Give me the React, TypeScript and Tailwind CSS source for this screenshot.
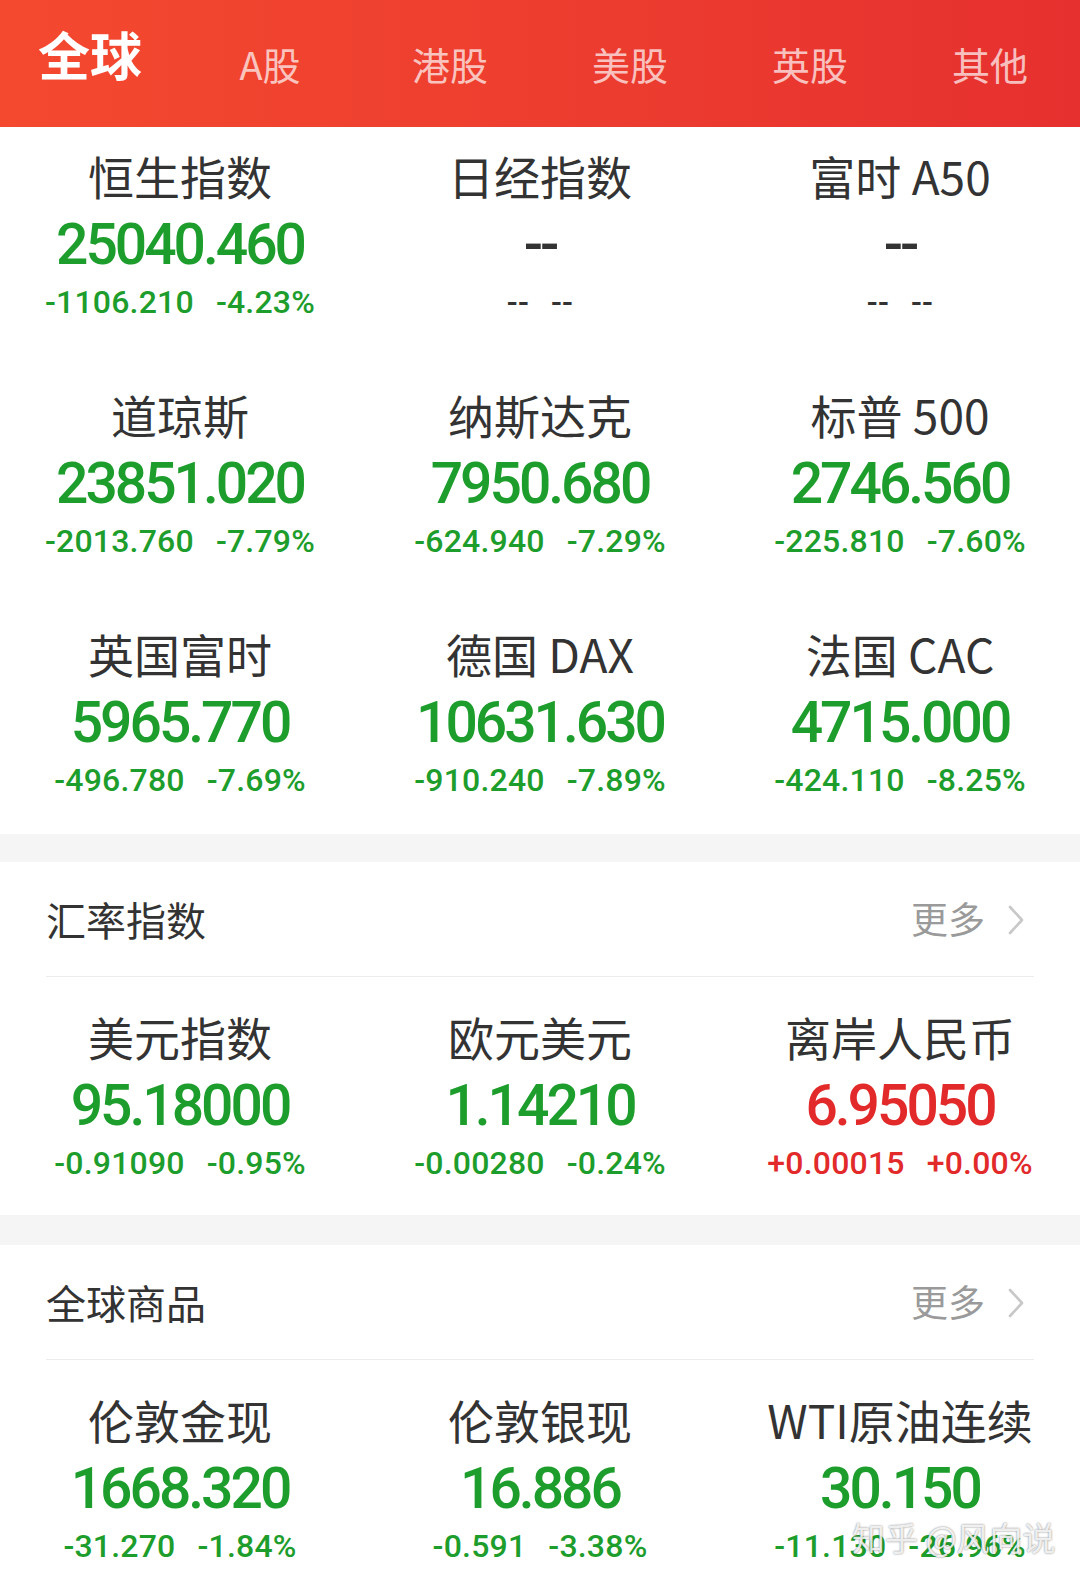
type Quote = {
  name: string
  value: string
  chg: string
  pct: string
  trend: 'down' | 'up' | 'none'
}

const tabs = ['全球', 'A股', '港股', '美股', '英股', '其他']

const markets: Quote[] = [
  { name: '恒生指数', value: '25040.460', chg: '-1106.210', pct: '-4.23%', trend: 'down' },
  { name: '日经指数', value: '--', chg: '--', pct: '--', trend: 'none' },
  { name: '富时 A50', value: '--', chg: '--', pct: '--', trend: 'none' },
  { name: '道琼斯', value: '23851.020', chg: '-2013.760', pct: '-7.79%', trend: 'down' },
  { name: '纳斯达克', value: '7950.680', chg: '-624.940', pct: '-7.29%', trend: 'down' },
  { name: '标普 500', value: '2746.560', chg: '-225.810', pct: '-7.60%', trend: 'down' },
  { name: '英国富时', value: '5965.770', chg: '-496.780', pct: '-7.69%', trend: 'down' },
  { name: '德国 DAX', value: '10631.630', chg: '-910.240', pct: '-7.89%', trend: 'down' },
  { name: '法国 CAC', value: '4715.000', chg: '-424.110', pct: '-8.25%', trend: 'down' },
]

const forex: Quote[] = [
  { name: '美元指数', value: '95.18000', chg: '-0.91090', pct: '-0.95%', trend: 'down' },
  { name: '欧元美元', value: '1.14210', chg: '-0.00280', pct: '-0.24%', trend: 'down' },
  { name: '离岸人民币', value: '6.95050', chg: '+0.00015', pct: '+0.00%', trend: 'up' },
]

const goods: Quote[] = [
  { name: '伦敦金现', value: '1668.320', chg: '-31.270', pct: '-1.84%', trend: 'down' },
  { name: '伦敦银现', value: '16.886', chg: '-0.591', pct: '-3.38%', trend: 'down' },
  { name: 'WTI原油连续', value: '30.150', chg: '-11.130', pct: '-26.96%', trend: 'down' },
]

const cjk = "font-['Noto_Sans_CJK_SC',sans-serif]"
const num = "font-['Roboto','Noto_Sans_CJK_SC',sans-serif]"

function trendColor(t: Quote['trend']) {
  if (t === 'down') return 'text-[#1d9d2c]'
  if (t === 'up') return 'text-[#e22a2b]'
  return 'text-[#333333]'
}

function QuoteCell({ q, top }: { q: Quote; top: string }) {
  const color = trendColor(q.trend)
  return (
    <div className={`flex flex-col items-center ${top}`}>
      <div className={`${cjk} text-[46px] leading-[56px] text-[#333333] whitespace-nowrap`}>{q.name}</div>
      <div className={`${num} mt-[10px] text-[57px] leading-[64px] font-medium tracking-[-3px] ${color}`}>
        {q.value}
      </div>
      <div className={`${num} mt-[5px] flex gap-[22px] text-[32px] leading-[40px] font-medium tracking-[0.2px] ${color}`}>
        <span>{q.chg}</span>
        <span>{q.pct}</span>
      </div>
    </div>
  )
}

function SectionHead({ title }: { title: string }) {
  return (
    <div className="mx-[46px] flex h-[115px] items-center justify-between border-b border-[#ececec]">
      <span className={`${cjk} text-[40px] text-[#333333]`}>{title}</span>
      <span className="flex items-center">
        <span className={`${cjk} text-[37px] text-[#9a9a9a]`}>更多</span>
        <svg className="ml-[23px] mr-[10px] mt-[2px]" width="16" height="30" viewBox="0 0 16 30" fill="none">
          <polyline points="2,2 14,15 2,28" stroke="#c8c8c8" strokeWidth="2.6" strokeLinecap="round" strokeLinejoin="round" />
        </svg>
      </span>
    </div>
  )
}

export default function App() {
  return (
    <div className="relative h-[1586px] w-[1080px] overflow-hidden bg-white">
      <div className="grid h-[127px] grid-cols-6 bg-linear-to-r from-[#f4492f] to-[#e6302f]">
        {tabs.map((t, i) => (
          <div
            key={t}
            className={`flex items-end justify-center ${cjk} leading-none ${
              i === 0 ? 'pb-[47px] text-[52px] font-bold text-white' : 'pb-[44px] text-[38px] text-white/70'
            }`}
          >
            {t}
          </div>
        ))}
      </div>

      <div className="grid grid-cols-3 gap-y-[10px]">
        {markets.map((q) => (
          <div key={q.name} className="h-[229px]">
            <QuoteCell q={q} top="pt-[20px]" />
          </div>
        ))}
      </div>

      <div className="h-[28px] bg-[#f5f5f5]" />

      <SectionHead title="汇率指数" />
      <div className="grid h-[238px] grid-cols-3">
        {forex.map((q) => (
          <QuoteCell key={q.name} q={q} top="pt-[31px]" />
        ))}
      </div>

      <div className="h-[30px] bg-[#f5f5f5]" />

      <SectionHead title="全球商品" />
      <div className="grid grid-cols-3">
        {goods.map((q) => (
          <QuoteCell key={q.name} q={q} top="pt-[31px]" />
        ))}
      </div>

      <div
        className={`absolute left-[852px] top-[1521px] ${cjk} text-[33px] leading-none text-white/85 [text-shadow:0_0_2px_rgba(0,0,0,0.55)]`}
      >
        知乎 @风向说
      </div>
    </div>
  )
}
